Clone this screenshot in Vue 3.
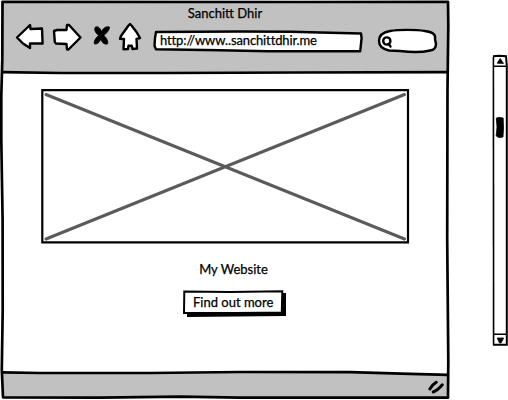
<script setup>
const title = 'Sanchitt Dhir'
const address = 'http://www..sanchittdhir.me'
const tools = [
  { name: 'Back', cls: 'back', box: '15 22 30 30', d: 'M17 37.5 L30 25 L30.5 29 L42 28.5 L42.6 43.5 L30 43.5 L30 48 L23 43.5 Z' },
  { name: 'Forward', cls: 'forward', box: '52 22 30 30', d: 'M54 31 L57 30 L66.5 30 L67 25 L69 25 L80.5 37.5 L68.5 49.5 L67 49.5 L66.5 44 L56 43.5 L54.8 42 Z' },
  { name: 'Stop', cls: 'stop', box: '92 24 20 24', solid: true, d: 'M95 27.5 C97 25.5 100 27.5 101.5 31.5 C103.5 27.5 106.5 26 109.5 27 C109.8 30 106.5 33 104 35.5 C107 38.5 108.5 42 107.5 44 C104 44.8 101.5 42 100.8 39 C99.5 42.5 97 44.5 94.5 44 C93.5 41.5 95.5 38 98.5 35.5 C95.5 33 94 30 95 27.5 Z' },
  { name: 'Home', cls: 'home', box: '117 22 26 30', d: 'M130 24 L131.5 25.5 L136.5 32 L140 38 L136.5 38.8 L137 48.5 L132.5 49 L131.8 45.8 L128.5 45.8 L128 49 L123.5 49.2 L124 39 L120 38.8 L121 36 L128.5 25.5 Z' }
]
</script>

<template>
  <div class="canvas">
    <section class="browser">
      <header class="chrome">
        <h1 class="title">{{ title }}</h1>
        <nav class="toolbar">
          <svg v-for="t in tools" :key="t.name" :class="['tool', t.cls]" :viewBox="t.box" :aria-label="t.name">
            <path :d="t.d" :class="t.solid ? 'solid' : 'ink'" />
          </svg>
          <div class="address">
            <svg class="sketch" viewBox="152 29 212 26">
              <path class="ink" d="M156 32 L240 31.5 L291 31.7 L320 32.5 L361 33.5 L361.6 38 L360.2 51.3 L268 51.3 L220 50.3 L156 49.3 L154.5 46 L155 38 Z" />
            </svg>
            <span class="address-text">{{ address }}</span>
          </div>
          <svg class="search" viewBox="377 27 62 28" aria-label="Search">
            <path class="ink" d="M379 41 C379 35 384 32 390 31 C399 29.5 416 29.5 425 31 C432 32 436 34 435 39 L436 44 C436 48 434 50 430 50.5 C422 52.5 408 52 400 51 L389 50.5 C382 49 379 46 379 41 Z" />
            <circle class="lens" cx="386.8" cy="41" r="3.6" />
            <path class="handle" d="M388.5 44 L390.5 46.5" />
          </svg>
        </nav>
      </header>

      <main class="content">
        <svg class="picture" viewBox="40 88 370 157" aria-label="Image">
          <path class="cross" d="M46 94.5 L404.5 239 M46 239 L404.5 94.5" />
          <path class="picture-edge" d="M42.3 90.2 H408 V242.4 H42.3 Z" />
        </svg>
        <p class="caption">My Website</p>
        <button class="more">
          <svg class="sketch" viewBox="182 289 106 29">
            <path class="shadow" d="M187 314 L281 312.5 L283 293 L286 293 L286 316 L187 317 Z" />
            <path class="button-edge" d="M184.3 291.5 L230 292 L282.3 291.3 L281.8 312.5 L235 313 L184 313 Z" />
          </svg>
          <span class="more-text">Find out more</span>
        </button>
      </main>

      <footer class="status">
        <svg class="status-bar" viewBox="0 370 450 30">
          <path class="status-fill" d="M2 372.5 L150 373 L240 372 L350 372.2 L448 374.8 V398 H2 Z" />
          <path class="line" d="M2 372.3 L40 373 L150 373 L240 372 L350 372.2 L410 373.8 L448 374.8" />
          <path class="grip" d="M429.8 389 C431 386.5 433 384.3 436.3 382.3 M433.2 392 C436 391 440 387.5 442.3 384.8" />
        </svg>
      </footer>

      <svg class="outline" viewBox="0 0 450 400">
        <path class="frame" d="M2.5 1.8 L300 2 L448 1.8 L448.3 26 L447.5 90 L447.2 240 L448.3 360 L448 397.7 L240 397.7 L180 396.7 L100 397.7 L3 397.3 L1.8 370 L2.7 310 L2.6 220 L1.3 140 L1.3 95 L2.3 60 Z" />
        <path class="line" d="M2 72.2 L60 73 L170 73 L300 72.5 L448 72.2" />
      </svg>
    </section>

    <aside class="scroll">
      <svg class="scrollbar" viewBox="490 54 20 294" aria-label="Scroll bar">
        <path class="rail" d="M493.4 57 L493.6 345" />
        <path class="rail-strong" d="M493 56.2 L499 55.8 L506 56.2 L506.8 66 V344.8 H493" />
        <path class="rail" d="M493 66.3 H507 M493 334.3 H507" />
        <path class="solid" d="M497.2 63.2 L500.2 58.5 L503.5 63.4 Z M497.2 338 H503.7 L501 343 H499.5 Z" />
        <path class="solid" d="M496.3 118 L499 117.4 L503.2 118 L503.5 128 L503 137 L499 137.6 L496.2 136 L497 127 Z" />
      </svg>
    </aside>
  </div>
</template>

<style>
body { background: #fff; overflow: hidden; }
</style>

<style scoped>
.canvas {
  display: flex;
  width: 508px;
  height: 400px;
  overflow: hidden;
  background: #fff;
  color: #000;
  font-family: Lato, "Liberation Sans", sans-serif;
  font-size: 13px;
  line-height: 16px;
  -webkit-text-stroke: 0.25px #000;
}
.browser {
  position: relative;
  display: flex;
  flex-direction: column;
  flex: none;
  width: 450px;
  height: 400px;
}
.chrome {
  height: 72px;
  margin: 1px 2px 0;
  padding-top: 4px;
  box-sizing: border-box;
  background: #c1c1c1;
}
.title {
  margin: 0;
  font-size: 13px;
  font-weight: 400;
  line-height: 16px;
  letter-spacing: 0;
  text-align: center;
}
.toolbar {
  display: flex;
  align-items: flex-start;
  padding: 1px 0 0 13px;
}
.tool { flex: none; display: block; width: 30px; height: 30px; }
.forward { margin-left: 7px; }
.stop { width: 20px; height: 24px; margin: 2px 0 0 10px; }
.home { width: 26px; margin-left: 5px; }
.address {
  display: grid;
  width: 212px;
  height: 26px;
  margin: 7px 0 0 9px;
}
.sketch { grid-area: 1 / 1; display: block; width: 100%; height: 100%; }
.address-text {
  grid-area: 1 / 1;
  padding: 3px 0 0 8px;
  letter-spacing: -0.12px;
  white-space: nowrap;
}
.search { width: 62px; height: 28px; margin: 5px 0 0 13px; }
.content {
  display: flex;
  flex-direction: column;
  align-items: center;
  flex: 1;
  padding-top: 15px;
}
.picture { width: 370px; height: 157px; flex: none; }
.caption { margin: 16px 0 0 17px; letter-spacing: 0; }
.more {
  display: grid;
  width: 106px;
  height: 29px;
  margin: 12px 0 0 20px;
  padding: 0;
  border: 0;
  background: none;
  color: inherit;
  font: inherit;
}
.more-text {
  grid-area: 1 / 1;
  padding: 5px 0 0 11px;
  letter-spacing: 0;
  text-align: left;
  white-space: nowrap;
}
.status { height: 30px; }
.status-bar { display: block; width: 450px; height: 30px; }
.outline { position: absolute; inset: 0; width: 450px; height: 400px; pointer-events: none; }
.scroll { margin: 54px 0 0 40px; }
.scrollbar { display: block; width: 20px; height: 294px; }
.ink { fill: #fff; stroke: #000; stroke-width: 2.4; stroke-linejoin: round; }
.solid { fill: #000; stroke: #000; stroke-width: 0.8; stroke-linejoin: round; }
.lens { fill: none; stroke: #000; stroke-width: 2.4; }
.handle { fill: none; stroke: #000; stroke-width: 2.4; stroke-linecap: round; }
.cross { fill: none; stroke: #5b5b5b; stroke-width: 3; stroke-linecap: round; }
.picture-edge { fill: none; stroke: #000; stroke-width: 2.2; }
.button-edge { fill: #fff; stroke: #000; stroke-width: 2; }
.shadow { fill: #000; }
.status-fill { fill: #c1c1c1; }
.line { fill: none; stroke: #000; stroke-width: 2.7; }
.grip { fill: none; stroke: #000; stroke-width: 3; stroke-linecap: round; }
.frame { fill: none; stroke: #000; stroke-width: 2.7; stroke-linejoin: round; }
.rail { fill: none; stroke: #000; stroke-width: 1.6; }
.rail-strong { fill: none; stroke: #000; stroke-width: 2; }
</style>
